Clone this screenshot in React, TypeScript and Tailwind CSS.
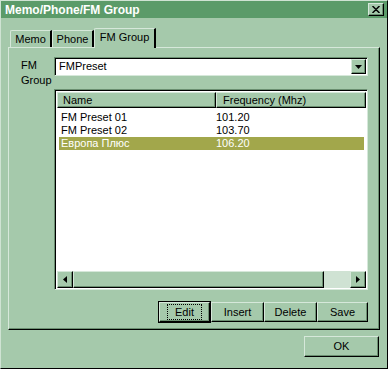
const raised =
  'border border-t-[#d6e8da] border-l-[#d6e8da] border-r-black border-b-black shadow-[inset_-1px_-1px_0_#6b8f71]'

const rows = [
  { name: 'FM Preset 01', freq: '101.20' },
  { name: 'FM Preset 02', freq: '103.70' },
  { name: 'Европа Плюс', freq: '106.20', selected: true },
]

function Button({ label, focused, className }: { label: string; focused?: boolean; className?: string }) {
  return (
    <div className={`flex items-center justify-center ${raised} ${focused ? 'outline outline-1 outline-black' : ''} ${className ?? ''}`}>
      <span className={focused ? 'px-[7px] leading-[14px] outline outline-1 outline-dotted outline-black' : ''}>{label}</span>
    </div>
  )
}

function Arrow({ dir }: { dir: 'left' | 'right' | 'down' }) {
  if (dir === 'down')
    return (
      <svg width="7" height="4" viewBox="0 0 7 4">
        <path d="M0 0h7L3.5 4z" fill="black" />
      </svg>
    )
  return (
    <svg width="4" height="7" viewBox="0 0 4 7">
      <path d={dir === 'left' ? 'M4 0v7L0 3.5z' : 'M0 0v7L4 3.5z'} fill="black" />
    </svg>
  )
}

const tab =
  'flex items-center justify-center border-t border-l border-t-[#d6e8da] border-l-[#d6e8da] border-r-2 border-r-black rounded-tl-[2px]'

export default function App() {
  return (
    <div
      className="w-[388px] h-[369px] bg-[#a5c9ab] flex flex-col text-[11px] text-black border border-t-[#cfe3d3] border-l-[#cfe3d3] border-r-black border-b-black overflow-hidden"
      style={{ fontFamily: '"Liberation Sans", Arial, sans-serif' }}
    >
      {/* Title bar */}
      <div className="h-[17px] bg-[#5b9b69] flex items-center justify-between pl-[4px] pr-[3px]">
        <span className="text-white font-bold text-[12px]">Memo/Phone/FM Group</span>
        <div className={`w-[16px] h-[13px] bg-[#a5c9ab] flex items-center justify-center ${raised}`}>
          <svg width="8" height="7" viewBox="0 0 8 7">
            <path d="M0.5 0l3.5 3.5L7.5 0M0.5 7l3.5-3.5L7.5 7" stroke="black" strokeWidth="1.5" fill="none" />
          </svg>
        </div>
      </div>

      {/* Tabs */}
      <div className="flex items-end pl-[9px] h-[29px]">
        <div className={`h-[17px] w-[42px] ${tab}`}>Memo</div>
        <div className={`h-[17px] w-[42px] ${tab}`}>Phone</div>
        <div className={`h-[20px] w-[62px] -mb-[1px] z-10 bg-[#a5c9ab] pb-[2px] ${tab}`}>FM Group</div>
      </div>

      {/* Tab panel */}
      <div className="mx-[7px] h-[283px] border border-t-[#d6e8da] border-l-[#d6e8da] border-r-black border-b-black shadow-[inset_-1px_-1px_0_#6b8f71] pl-[12px] pr-[11px] pt-[9px] flex flex-col">
        <div className="flex h-[19px] items-start">
          <div className="w-[33px] leading-[15px] pt-[1px]">
            FM
            <br />
            Group
          </div>
          <div className="flex-1 h-[19px] bg-white flex items-center border border-t-[#6b8f71] border-l-[#6b8f71] border-r-[#d6e8da] border-b-[#d6e8da] shadow-[inset_1px_1px_0_black]">
            <span className="pl-[4px] flex-1">FMPreset</span>
            <div className={`w-[15px] h-[15px] bg-[#a5c9ab] flex items-center justify-center mr-[1px] ${raised}`}>
              <Arrow dir="down" />
            </div>
          </div>
        </div>

        {/* List view */}
        <div className="ml-[33px] mt-[13px] h-[201px] bg-white flex flex-col border border-t-[#6b8f71] border-l-[#6b8f71] border-r-[#d6e8da] border-b-[#d6e8da] shadow-[inset_1px_1px_0_black] pl-[2px] pt-[2px] pr-[1px] pb-[1px]">
          <div className="flex h-[16px] bg-[#a5c9ab]">
            <div className={`w-[159px] pl-[5px] flex items-center ${raised}`}>Name</div>
            <div className={`flex-1 pl-[6px] flex items-center ${raised}`}>Frequency (Mhz)</div>
          </div>
          <div className="flex-1 pt-[3px] pl-[2px] pr-[2px]">
            {rows.map((r) => (
              <div
                key={r.name}
                className={`flex h-[13px] items-center ${r.selected ? 'bg-[#a2a74b] text-white' : ''}`}
              >
                <span className="w-[157px] pl-[2px]">{r.name}</span>
                <span>{r.freq}</span>
              </div>
            ))}
          </div>
          {/* Horizontal scrollbar */}
          <div className="flex h-[17px] bg-[#cfe2d3]">
            <div className={`w-[16px] bg-[#a5c9ab] flex items-center justify-center ${raised}`}>
              <Arrow dir="left" />
            </div>
            <div className={`w-[251px] bg-[#a5c9ab] ${raised}`} />
            <div className="flex-1" />
            <div className={`w-[16px] bg-[#a5c9ab] flex items-center justify-center ${raised}`}>
              <Arrow dir="right" />
            </div>
          </div>
        </div>

        {/* Buttons */}
        <div className="flex justify-end mt-[12px] h-[20px]">
          <Button label="Edit" focused className="w-[51px]" />
          <Button label="Insert" className="w-[53px] ml-[1px]" />
          <Button label="Delete" className="w-[53px]" />
          <Button label="Save" className="w-[51px]" />
        </div>
      </div>

      {/* Footer */}
      <div className="flex justify-end pr-[8px] pt-[6px]">
        <Button label="OK" className="w-[75px] h-[21px]" />
      </div>
    </div>
  )
}
